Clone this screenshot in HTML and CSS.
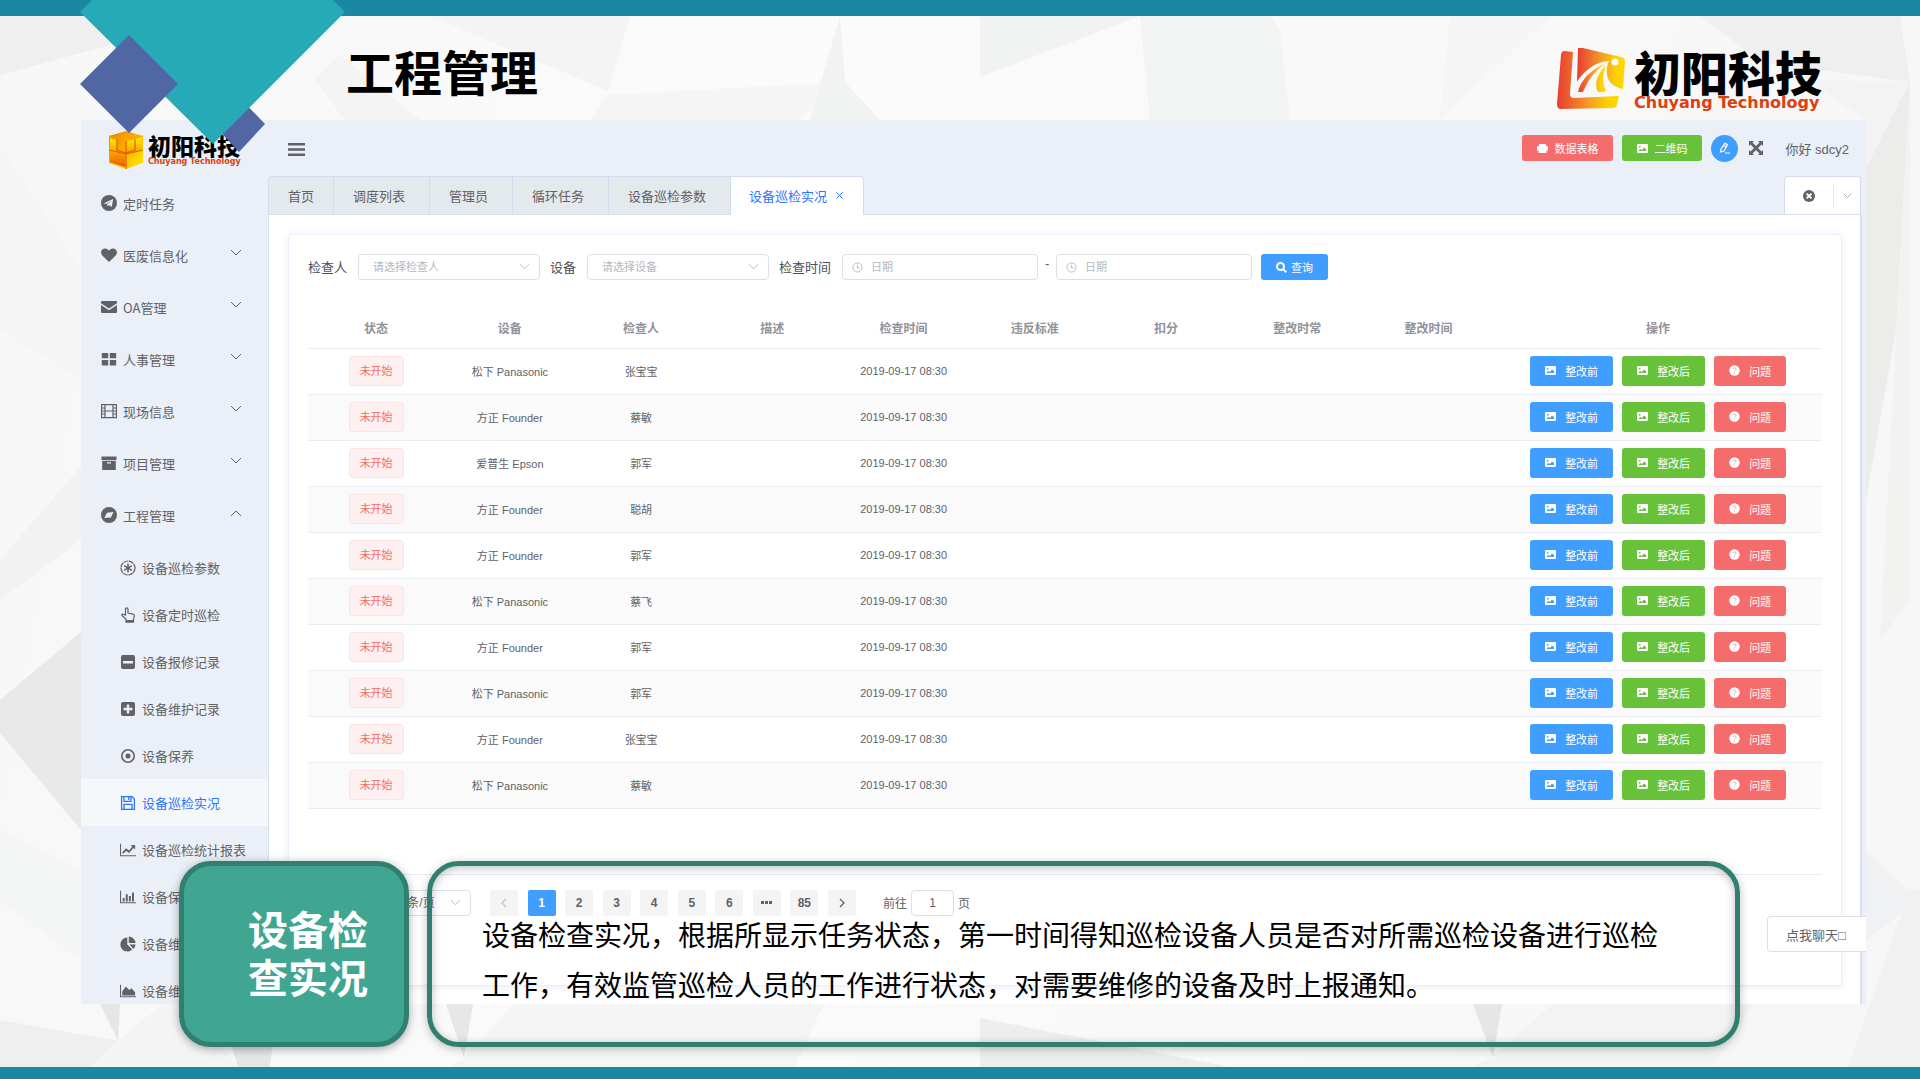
FILE: index.html
```html
<!DOCTYPE html>
<html lang="zh-CN">
<head>
<meta charset="utf-8">
<title>工程管理</title>
<link rel="stylesheet" href="styles.css">
</head>
<body>
<svg class="defs" aria-hidden="true">
  <defs>
    <linearGradient id="sun" x1="0" x2="1" y1="0" y2="0"><stop offset="0" stop-color="#e83b32"/><stop offset=".5" stop-color="#f49a26"/><stop offset=".8" stop-color="#fdd000"/><stop offset="1" stop-color="#fdd900"/></linearGradient>
    <linearGradient id="cubeA" x1="0" x2="1" y1="0" y2="1"><stop offset="0" stop-color="#f47a00"/><stop offset="1" stop-color="#ffee00"/></linearGradient>
    <linearGradient id="cubeB" x1="0" x2="0" y1="0" y2="1"><stop offset="0" stop-color="#fff000"/><stop offset="1" stop-color="#ee5a00"/></linearGradient>
    <symbol id="i-down" viewBox="0 0 12 8"><path d="M1 1l5 5 5-5" fill="none" stroke="currentColor"/></symbol>
    <symbol id="i-up" viewBox="0 0 12 8"><path d="M1 7l5-5 5 5" fill="none" stroke="currentColor"/></symbol>
    <symbol id="i-pic" viewBox="0 0 11 11"><path fill-rule="evenodd" d="M1 1h9q1 0 1 1v7q0 1-1 1H1q-1 0-1-1V2q0-1 1-1zM2 8h7V6L7 4.500 5 7 3.500 6 2 7zM2 3v1.500h1.500V3z"/></symbol>
    <symbol id="i-help" viewBox="0 0 11 11"><circle cx="5.500" cy="5.500" r="5.200"/><path d="M4 4.300q.2-1.400 1.600-1.400T7 4.200q0 .7-.8 1.100-.7.400-.7 1.200M5.500 7.400v1.100" fill="none" stroke="#f9a5a5"/></symbol>
    <symbol id="i-clock" viewBox="0 0 12 12"><g fill="none" stroke="currentColor"><circle cx="6" cy="6" r="5"/><path d="M6 3v3.500h2.500"/></g></symbol>
    <symbol id="i-plane" viewBox="0 0 16 16"><circle cx="8" cy="8" r="8"/><path d="M2.800 8.300L12.200 4l-1.500 8-3-2-1.300 1.500-.3-2.300L10.500 6 5 9z" fill="#ebf0f8"/></symbol>
    <symbol id="i-heart" viewBox="0 0 16 16"><path d="M8 15L1.300 8.400C-1.400 5.300.7 1.500 4 1.500c2 0 3.300 1 4 2.300.7-1.300 2-2.300 4-2.300 3.300 0 5.400 3.800 2.700 6.900z"/></symbol>
    <symbol id="i-mail" viewBox="0 0 16 16"><path d="M1 2h14q1 0 1 1v1.200L8 9.500 0 4.200V3q0-1 1-1zM0 6l8 5.300L16 6v7q0 1-1 1H1q-1 0-1-1z"/></symbol>
    <symbol id="i-grid" viewBox="0 0 16 16"><path d="M1.500 2h5q.7 0 .7.700v4.500H.8V2.700q0-.7.700-.7zM9 2h5.500q.7 0 .7.700v4.500H8.800V2zM.8 9h6.400v5.500H1.500q-.7 0-.7-.7zM8.800 9h6.400v4.800q0 .7-.7.700H8.800z"/></symbol>
    <symbol id="i-film" viewBox="0 0 16 16"><path d="M.6 1.600h14.800v13H.6zM4 1.600v13M12 1.600v13M4 8h8M.6 5H4M.6 8H4M.6 11H4M12 5h3.400M12 8h3.400M12 11h3.400" fill="none" stroke="currentColor" stroke-width="1.200"/></symbol>
    <symbol id="i-box" viewBox="0 0 16 16"><path d="M.5 1.500h15V5H.5z"/><path fill-rule="evenodd" d="M1.200 5.700h13.600V15H1.200zM6 7.300v1.200h4V7.300z"/></symbol>
    <symbol id="i-compass" viewBox="0 0 16 16"><circle cx="8" cy="8" r="8"/><path d="M6 5.700l6.500-.7-2.600 5.500-6.600.6z" fill="#ebf0f8"/></symbol>
    <symbol id="i-aster" viewBox="0 0 16 16"><circle cx="8" cy="8" r="7" fill="none" stroke="currentColor" stroke-width="1.200" stroke-dasharray="5 .6"/><path d="M8 3.500v9M4.100 5.700l7.800 4.600M11.900 5.700l-7.800 4.600" fill="none" stroke="currentColor" stroke-width="1.500"/></symbol>
    <symbol id="i-hand" viewBox="0 0 16 16"><path d="M6 14.800V12L2 8.500Q1 7 3 7l2.500 1V2q0-1.200 1.200-1.200T8 2v4l5 1.200q1.500.3 1.400 1.800L13.500 12v2.800z" fill="none" stroke="currentColor" stroke-width="1.200"/><path d="M6 13h8v2.500H6z"/></symbol>
    <symbol id="i-minus" viewBox="0 0 16 16"><path fill-rule="evenodd" d="M3 1h10q2 0 2 2v10q0 2-2 2H3q-2 0-2-2V3q0-2 2-2zm0 6v2.500h10V7z"/></symbol>
    <symbol id="i-plus" viewBox="0 0 16 16"><path fill-rule="evenodd" d="M3 1h10q2 0 2 2v10q0 2-2 2H3q-2 0-2-2V3q0-2 2-2zm3.800 2.500v3.300H3.500v2.400h3.300v3.300h2.400V9.200h3.300V6.800H9.200V3.500z"/></symbol>
    <symbol id="i-target" viewBox="0 0 16 16"><circle cx="8" cy="8" r="6.200" fill="none" stroke="currentColor" stroke-width="1.600"/><circle cx="8" cy="8" r="2.500"/></symbol>
    <symbol id="i-save" viewBox="0 0 16 16"><path d="M1.600 1.600h10.600l2.200 2.400v10.400H1.600zM4 1.600v4.800h7V1.600M4 14.400v-5h8v5M8.800 2v3" fill="none" stroke="currentColor" stroke-width="1.300"/></symbol>
    <symbol id="i-line" viewBox="0 0 18 14"><path d="M.6 0v13.400H18" fill="none" stroke="currentColor" stroke-width="1.200"/><path d="M3 10.500l4-4 3 2.500 5-5.500" fill="none" stroke="currentColor" stroke-width="2"/><path d="M12 1.500h5v5z"/></symbol>
    <symbol id="i-bar" viewBox="0 0 18 14"><path d="M.6 0v13.400H18" fill="none" stroke="currentColor" stroke-width="1.200"/><path d="M3 8h2.200v4H3zM6.500 4h2.200v8H6.500zM10 6h2.200v6H10zM13.500 2h2.200v10h-2.200z"/></symbol>
    <symbol id="i-area" viewBox="0 0 18 14"><path d="M.6 0v13.400H18" fill="none" stroke="currentColor" stroke-width="1.200"/><path d="M2.500 12V7.500L6.500 2l4 4 2.500-2 4 4.500V12z"/></symbol>
    <symbol id="i-pie" viewBox="0 0 16 16"><path d="M7.300 1.500v7l5 5A7 7 0 1 1 7.300 1.500z"/><path d="M8.800.5A7 7 0 0 1 15.500 7H8.800zM9.500 8.500h6a7 7 0 0 1-2 4.500z"/></symbol>
  </defs>
</svg>

<div class="slide">
  <svg class="facets" viewBox="0 0 1920 1079" preserveAspectRatio="none" aria-hidden="true">
    <path fill="#ececec" d="M0 16H130L110 45 0 75z"/>
    <path fill="#f2f2f2" d="M0 145L81 270V380L0 330z" opacity=".4"/>
    <path fill="#f0f0f0" d="M0 560L81 466V540L0 600z"/>
    <path fill="#e2e3e4" d="M0 700L81 632V830L0 733z"/>
    <path fill="#eeeff0" d="M0 830L81 870V960L0 900z" opacity=".5"/>
    <path fill="#ececec" d="M0 1020L118 1041 100 1067H0z"/>
    <path fill="#dedfdf" d="M100 1004h20l-2 37zM230 1040h43l-3 27h-32zM446 1004h27l-9 54zM1473 1004h29l-9 54z"/>
    <path fill="#f3f3f3" d="M118 1041l60-50 60 76H90zM464 1058l50-54h310l-30 63H450z"/>
    <path fill="#e8e9e9" d="M980 1018l250 49H980z"/>
    <path fill="#f2f2f2" d="M1493 1056l60-52h200l-40 63h-240z"/>
    <path fill="#f2f2f2" d="M430 16h200l-22 75zM340 55l80 65h-75l-30-40z"/>
    <path fill="#f4f4f4" d="M608 95L840 82 800 120H590z"/>
    <path fill="#eeefef" d="M840 16l5 66 35 38h-70zM980 16h160L980 77z"/>
    <path fill="#f0f1f1" d="M1140 16h130l10 14 10 90h-140z"/>
    <path fill="#f5f5f5" d="M1450 16h100l-110 104z"/>
    <path fill="#ecedec" d="M1700 16h200l10 66-150-20z"/>
    <path fill="#f2f2f2" d="M1910 82L1866 168V120l-60-40z"/>
    <path fill="#e8e8e7" d="M1910 82L1866 168V500l30-170z"/>
    <path fill="#f1f1f0" d="M1910 82V600L1880 640 1900 260z"/>
    <path fill="#eef0f1" d="M1866 850l52 50-52 40z"/>
    <path fill="#f0efef" d="M1910 890L1848 1067H1920V890z"/>
  </svg>
  <div class="band"></div>

  <header class="title-bar">
    <h1 class="title">工程管理</h1>
    <div class="brand">
      <svg class="brand-mark" viewBox="0 0 68 61" aria-hidden="true">
        <path fill="url(#sun)" d="M8 3l8 1-3 42q0 4 4 4l45-2-2 9q-1 3-4 3L4 61q-4 0-4-5L4 7q0-4 4-4z"/>
        <path fill="url(#sun)" d="M22 0h4l38 9q4 1 4 4l-2 28q-14-3-16-14-1-8 2-14-12 0-24 11Q22 30 20 34l1-34z"/>
        <path fill="url(#sun)" d="M21 44q4-18 28-29-16 11-23 29zM41 44q-6-12 8-27-6 14 0 26l-3 1z"/>
        <circle cx="58" cy="14" r="3.500" fill="#fff"/>
      </svg>
      <div class="brand-text"><span class="brand-cn">初阳科技</span><span class="brand-en">Chuyang Technology</span></div>
    </div>
  </header>

  <main class="app">
    <nav class="sidebar" aria-label="主菜单">
      <div class="logo">
        <svg class="logo-mark" viewBox="0 0 34 38" aria-hidden="true">
          <path fill="url(#cubeA)" d="M0 5L17 0l17 5v27l-17 6-17-6z"/>
          <path fill="url(#cubeB)" d="M1 7l7 2v11l8 2v14L1 31zM18 9l15-3v14l-15 3z"/>
          <path d="M17 10v28M0 19l17 4 17-4M8 8v11l9 3M26 8v11l-9 3" fill="none" stroke="#e85a00" stroke-width="1.200"/>
          <path d="M0 5l17 5 17-5M9 3l17 4M25 3L9 7" fill="none" stroke="#f9a000" stroke-width="1"/>
        </svg>
        <div class="logo-text"><span class="logo-cn">初阳科技</span><span class="logo-en">Chuyang Technology</span></div>
      </div>
      <ul class="menu">
        <li><a href="#" class="item"><svg class="ico"><use href="#i-plane"/></svg>定时任务</a></li>
        <li><a href="#" class="item"><svg class="ico"><use href="#i-heart"/></svg>医废信息化<svg class="arrow"><use href="#i-down"/></svg></a></li>
        <li><a href="#" class="item"><svg class="ico"><use href="#i-mail"/></svg>OA管理<svg class="arrow"><use href="#i-down"/></svg></a></li>
        <li><a href="#" class="item"><svg class="ico"><use href="#i-grid"/></svg>人事管理<svg class="arrow"><use href="#i-down"/></svg></a></li>
        <li><a href="#" class="item"><svg class="ico"><use href="#i-film"/></svg>现场信息<svg class="arrow"><use href="#i-down"/></svg></a></li>
        <li><a href="#" class="item"><svg class="ico"><use href="#i-box"/></svg>项目管理<svg class="arrow"><use href="#i-down"/></svg></a></li>
        <li><a href="#" class="item"><svg class="ico"><use href="#i-compass"/></svg>工程管理<svg class="arrow"><use href="#i-up"/></svg></a>
          <ul class="submenu">
            <li><a href="#" class="sub"><svg class="sico"><use href="#i-aster"/></svg>设备巡检参数</a></li>
            <li><a href="#" class="sub"><svg class="sico"><use href="#i-hand"/></svg>设备定时巡检</a></li>
            <li><a href="#" class="sub"><svg class="sico"><use href="#i-minus"/></svg>设备报修记录</a></li>
            <li><a href="#" class="sub"><svg class="sico"><use href="#i-plus"/></svg>设备维护记录</a></li>
            <li><a href="#" class="sub"><svg class="sico"><use href="#i-target"/></svg>设备保养</a></li>
            <li><a href="#" class="sub current"><svg class="sico"><use href="#i-save"/></svg>设备巡检实况</a></li>
            <li><a href="#" class="sub"><svg class="sico"><use href="#i-line"/></svg>设备巡检统计报表</a></li>
            <li><a href="#" class="sub"><svg class="sico"><use href="#i-bar"/></svg>设备保</a></li>
            <li><a href="#" class="sub"><svg class="sico"><use href="#i-pie"/></svg>设备维</a></li>
            <li><a href="#" class="sub"><svg class="sico"><use href="#i-area"/></svg>设备维</a></li>
          </ul>
        </li>
      </ul>
    </nav>

    <div class="main">
      <div class="toolbar">
        <button class="icon-btn burger" aria-label="折叠菜单"><svg viewBox="0 0 17 15"><path d="M0 1h17v2.500H0zM0 6.300h17v2.500H0zM0 11.600h17v2.500H0z"/></svg></button>
        <div class="tools">
          <button class="btn small danger"><svg viewBox="0 0 11 11"><path d="M2 1h7v2h1q1 0 1 1v3.500H9.500V10h-8V7.500H0V4q0-1 1-1h1z"/></svg>数据表格</button>
          <button class="btn small success"><svg><use href="#i-pic"/></svg>二维码</button>
          <button class="round" aria-label="编辑"><svg viewBox="0 0 12 12"><path d="M1.500 10l.5-3L6 1.200l2.500 1.500L5 9zM4.500 3.500L7 5M6 11h5" fill="none" stroke="#fff" stroke-width="1.200"/></svg></button>
          <button class="icon-btn full" aria-label="全屏"><svg viewBox="0 0 14 14"><path d="M0 0h5L3.500 1.500 7 5l3.500-3.500L9 0h5v5l-1.500-1.500L9 7l3.500 3.500L14 9v5H9l1.500-1.500L7 9l-3.500 3.500L5 14H0V9l1.500 1.500L5 7 1.500 3.500 0 5z"/></svg></button>
          <span class="hello">你好 sdcy2</span>
        </div>
      </div>

      <div class="tabs">
        <a href="#" class="tab home">首页</a>
        <a href="#" class="tab">调度列表</a>
        <a href="#" class="tab">管理员</a>
        <a href="#" class="tab">循环任务</a>
        <a href="#" class="tab">设备巡检参数</a>
        <a href="#" class="tab active">设备巡检实况<svg class="x" viewBox="0 0 7 7"><path d="M.5.5l6 6M6.500.5l-6 6" fill="none" stroke="currentColor"/></svg></a>
        <div class="tab-tools">
          <button class="icon-btn close-all" aria-label="关闭标签"><svg viewBox="0 0 12 12"><circle cx="6" cy="6" r="6"/><path d="M3.600 3.600l4.800 4.800M8.400 3.600L3.600 8.400" stroke="#fff" stroke-width="2"/></svg></button>
          <button class="icon-btn more" aria-label="更多"><svg><use href="#i-down"/></svg></button>
        </div>
      </div>

      <div class="content">
        <section class="card">
          <form class="filters">
            <label for="who">检查人</label>
            <div class="field"><select id="who"><option>请选择检查人</option></select><svg class="caret"><use href="#i-down"/></svg></div>
            <label for="dev">设备</label>
            <div class="field"><select id="dev"><option>请选择设备</option></select><svg class="caret"><use href="#i-down"/></svg></div>
            <label for="from">检查时间</label>
            <div class="field date"><input id="from" type="text" placeholder="日期"><svg class="clock"><use href="#i-clock"/></svg></div>
            <span class="dash">-</span>
            <div class="field date"><input type="text" placeholder="日期" aria-label="结束日期"><svg class="clock"><use href="#i-clock"/></svg></div>
            <button type="button" class="btn search"><svg viewBox="0 0 11 11"><path d="M4.500 1a3.500 3.500 0 1 1 0 7 3.500 3.500 0 0 1 0-7zM7 7l3.300 3.300" fill="none" stroke="#fff" stroke-width="2"/></svg>查询</button>
          </form>

          <table class="grid">
            <colgroup><col class="c-status"><col span="8" class="c-data"><col class="c-ops"></colgroup>
            <thead><tr><th>状态</th><th>设备</th><th>检查人</th><th>描述</th><th>检查时间</th><th>违反标准</th><th>扣分</th><th>整改时常</th><th>整改时间</th><th>操作</th></tr></thead>
            <tbody>
              <tr><td><span class="tag">未开始</span></td><td>松下 Panasonic</td><td>张宝宝</td><td></td><td>2019-09-17 08:30</td><td></td><td></td><td></td><td></td><td><div class="ops"><button class="btn primary"><svg><use href="#i-pic"/></svg>整改前</button><button class="btn success"><svg><use href="#i-pic"/></svg>整改后</button><button class="btn danger"><svg><use href="#i-help"/></svg>问题</button></div></td></tr>
              <tr><td><span class="tag">未开始</span></td><td>方正 Founder</td><td>蔡敏</td><td></td><td>2019-09-17 08:30</td><td></td><td></td><td></td><td></td><td><div class="ops"><button class="btn primary"><svg><use href="#i-pic"/></svg>整改前</button><button class="btn success"><svg><use href="#i-pic"/></svg>整改后</button><button class="btn danger"><svg><use href="#i-help"/></svg>问题</button></div></td></tr>
              <tr><td><span class="tag">未开始</span></td><td>爱普生 Epson</td><td>郭军</td><td></td><td>2019-09-17 08:30</td><td></td><td></td><td></td><td></td><td><div class="ops"><button class="btn primary"><svg><use href="#i-pic"/></svg>整改前</button><button class="btn success"><svg><use href="#i-pic"/></svg>整改后</button><button class="btn danger"><svg><use href="#i-help"/></svg>问题</button></div></td></tr>
              <tr><td><span class="tag">未开始</span></td><td>方正 Founder</td><td>聪胡</td><td></td><td>2019-09-17 08:30</td><td></td><td></td><td></td><td></td><td><div class="ops"><button class="btn primary"><svg><use href="#i-pic"/></svg>整改前</button><button class="btn success"><svg><use href="#i-pic"/></svg>整改后</button><button class="btn danger"><svg><use href="#i-help"/></svg>问题</button></div></td></tr>
              <tr><td><span class="tag">未开始</span></td><td>方正 Founder</td><td>郭军</td><td></td><td>2019-09-17 08:30</td><td></td><td></td><td></td><td></td><td><div class="ops"><button class="btn primary"><svg><use href="#i-pic"/></svg>整改前</button><button class="btn success"><svg><use href="#i-pic"/></svg>整改后</button><button class="btn danger"><svg><use href="#i-help"/></svg>问题</button></div></td></tr>
              <tr><td><span class="tag">未开始</span></td><td>松下 Panasonic</td><td>蔡飞</td><td></td><td>2019-09-17 08:30</td><td></td><td></td><td></td><td></td><td><div class="ops"><button class="btn primary"><svg><use href="#i-pic"/></svg>整改前</button><button class="btn success"><svg><use href="#i-pic"/></svg>整改后</button><button class="btn danger"><svg><use href="#i-help"/></svg>问题</button></div></td></tr>
              <tr><td><span class="tag">未开始</span></td><td>方正 Founder</td><td>郭军</td><td></td><td>2019-09-17 08:30</td><td></td><td></td><td></td><td></td><td><div class="ops"><button class="btn primary"><svg><use href="#i-pic"/></svg>整改前</button><button class="btn success"><svg><use href="#i-pic"/></svg>整改后</button><button class="btn danger"><svg><use href="#i-help"/></svg>问题</button></div></td></tr>
              <tr><td><span class="tag">未开始</span></td><td>松下 Panasonic</td><td>郭军</td><td></td><td>2019-09-17 08:30</td><td></td><td></td><td></td><td></td><td><div class="ops"><button class="btn primary"><svg><use href="#i-pic"/></svg>整改前</button><button class="btn success"><svg><use href="#i-pic"/></svg>整改后</button><button class="btn danger"><svg><use href="#i-help"/></svg>问题</button></div></td></tr>
              <tr><td><span class="tag">未开始</span></td><td>方正 Founder</td><td>张宝宝</td><td></td><td>2019-09-17 08:30</td><td></td><td></td><td></td><td></td><td><div class="ops"><button class="btn primary"><svg><use href="#i-pic"/></svg>整改前</button><button class="btn success"><svg><use href="#i-pic"/></svg>整改后</button><button class="btn danger"><svg><use href="#i-help"/></svg>问题</button></div></td></tr>
              <tr><td><span class="tag">未开始</span></td><td>松下 Panasonic</td><td>蔡敏</td><td></td><td>2019-09-17 08:30</td><td></td><td></td><td></td><td></td><td><div class="ops"><button class="btn primary"><svg><use href="#i-pic"/></svg>整改前</button><button class="btn success"><svg><use href="#i-pic"/></svg>整改后</button><button class="btn danger"><svg><use href="#i-help"/></svg>问题</button></div></td></tr>
            </tbody>
          </table>

          <div class="pagination">
            <div class="field size"><select aria-label="每页条数"><option>10条/页</option></select><svg class="caret"><use href="#i-down"/></svg></div>
            <div class="pages">
              <button class="page off" aria-label="上一页"><svg viewBox="0 0 6 10"><path d="M5 1L1 5l4 4" fill="none" stroke="currentColor" stroke-width="1.300"/></svg></button>
              <button class="page on">1</button>
              <button class="page">2</button>
              <button class="page">3</button>
              <button class="page">4</button>
              <button class="page">5</button>
              <button class="page">6</button>
              <button class="page" aria-label="更多页"><svg class="dots" viewBox="0 0 11 3"><path d="M0 0h3v3H0zM4 0h3v3H4zM8 0h3v3H8z"/></svg></button>
              <button class="page">85</button>
              <button class="page" aria-label="下一页"><svg viewBox="0 0 6 10"><path d="M1 1l4 4-4 4" fill="none" stroke="currentColor" stroke-width="1.300"/></svg></button>
            </div>
            <label class="jump">前往<input type="text" value="1">页</label>
          </div>
        </section>
      </div>
    </div>
    <button class="chat">点我聊天□</button>
  </main>
  <div class="foot"></div>

  <svg class="diamonds" viewBox="0 0 266 152" aria-hidden="true">
    <path fill="#5167a4" d="M159 97l26 27-26 28-26-28z"/>
    <path fill="#27aab8" d="M0 12L12 0h241l12 12-132 132z"/>
    <path fill="#5167a4" d="M49 35l49 49-49 49L0 84z"/>
  </svg>
  <div class="callout badge"><h2>设备检<br>查实况</h2></div>
  <div class="callout note"><p>设备检查实况，根据所显示任务状态，第一时间得知巡检设备人员是否对所需巡检设备进行巡检工作，有效监管巡检人员的工作进行状态，对需要维修的设备及时上报通知。</p></div>
</div>
</body>
</html>
```
FILE: styles.css
```css
* { box-sizing: border-box; }
body {
  margin: 0;
  font-family: "Liberation Sans", "Noto Sans CJK SC", sans-serif;
  font-size: 13px;
  color: #606266;
}
button, input, select { font: inherit; color: inherit; margin: 0; }
button { cursor: pointer; }
a { color: inherit; text-decoration: none; }
ul { list-style: none; margin: 0; padding: 0; }
svg { fill: currentColor; flex: none; display: block; }
.defs { position: absolute; width: 0; height: 0; }

/* slide frame */
.slide {
  position: relative;
  height: 100vh;
  display: flex;
  flex-direction: column;
  overflow: hidden;
  background: linear-gradient(100deg, #f7f7f7, #fbfbfb 40%, #f6f6f6);
}
.facets { position: absolute; left: 0; top: 0; width: 100%; height: 100%; opacity: .7; }
.band { position: relative; flex: none; height: 16px; background: #1a87a3; }
.title-bar {
  position: relative;
  flex: none;
  height: 104px;
  padding: 0 98px 0 346px;
  display: flex;
  justify-content: space-between;
}
.title {
  margin: 18px 0 0;
  font: 700 48px/72px "Noto Sans CJK SC", sans-serif;
  color: #000;
}
.brand { display: flex; gap: 9px; padding-top: 32px; }
.brand-mark { width: 68px; height: 61px; }
.brand-text { display: flex; flex-direction: column; }
.brand-cn {
  font: 900 47px/46px "Noto Sans CJK SC", sans-serif;
  color: #000;
}
.brand-en {
  font: 700 16px/18px "DejaVu Sans", sans-serif;
  color: #dc4010;
}
.foot { position: relative; flex: none; height: 75px; border-bottom: 12px solid #1a87a3; }

/* application window */
.app {
  position: relative;
  flex: 1;
  min-height: 0;
  margin: 0 54px 0 81px;
  display: flex;
  overflow: hidden;
  background: #ebf0f8;
}
.sidebar { flex: none; width: 187px; font-family: "Noto Sans CJK SC", sans-serif; }
.logo { height: 57px; padding: 11px 0 0 28px; display: flex; gap: 5px; }
.logo-mark { width: 34px; height: 38px; }
.logo-text { display: flex; flex-direction: column; padding-top: 2px; }
.logo-cn { font-weight: 900; font-size: 23px; line-height: 24px; color: #000; }
.logo-en { font: 700 8px/9px "DejaVu Sans", sans-serif; color: #dc4010; white-space: nowrap; }
.item { height: 52px; padding: 0 26px 0 20px; display: flex; align-items: center; gap: 6px; }
.ico { width: 16px; height: 16px; }
.arrow { width: 12px; height: 8px; margin-left: auto; margin-bottom: 4px; }
.submenu { padding-top: 3px; }
.sub { height: 47px; padding-left: 39px; display: flex; align-items: center; gap: 6px; white-space: nowrap; }
.sico { width: 16px; height: 16px; }
.current { background: #f4f8fb; color: #2f74ff; }

.main { flex: 1; min-width: 0; display: flex; flex-direction: column; }
.toolbar { flex: none; height: 56px; padding: 0 17px 0 20px; display: flex; align-items: center; justify-content: space-between; }
.tools { display: flex; align-items: center; gap: 9px; }
.icon-btn { border: 0; padding: 0; background: none; }
.burger svg { width: 17px; height: 15px; margin-top: 3px; }
.full { padding: 0 13px 0 2px; }
.full svg { width: 14px; height: 14px; }
.round {
  width: 27px; height: 27px; border: 0; border-radius: 50%; padding: 0;
  background: #409eff; display: flex; align-items: center; justify-content: center;
}
.round svg { width: 12px; height: 12px; }
.btn {
  height: 30px; padding: 0 15px; border: 0; border-radius: 3px;
  display: flex; align-items: center; gap: 9px;
  font-size: 11px; color: #fff; background: #409eff; white-space: nowrap;
}
.btn svg { width: 11px; height: 11px; }
.small { height: 26px; gap: 6px; }
.danger { background: #f56c6c; }
.success { background: #67c23a; }

.tabs { flex: none; display: flex; height: 39px; margin-right: 5px; border-bottom: 1px solid #d8dff0; font-family: "Noto Sans CJK SC", sans-serif; }
.tab {
  height: 38px; padding: 0 24px 1px 19px; display: flex; align-items: center; gap: 9px;
  background: #e4e9ed; border: 1px solid #d3dbec; border-width: 1px 1px 0 0;
}
.home { padding-right: 19px; border-left-width: 1px; border-top-left-radius: 4px; }
.active { height: 39px; padding-right: 20px; padding-left: 18px; background: #fff; color: #2f74ff; border-top-right-radius: 4px; }
.x { width: 7px; height: 7px; }
.tab-tools {
  margin-left: auto; width: 77px; padding: 6px 0; display: flex; background: #fff;
  border: 1px solid #d3dbec; border-bottom: 0; border-radius: 4px 4px 0 0;
}
.close-all { flex: 1; display: flex; align-items: center; justify-content: center; border-right: 1px solid #e4e7ed; }
.close-all svg { width: 12px; height: 12px; }
.more { width: 26px; display: flex; align-items: center; justify-content: center; color: #909399; }
.more svg { width: 9px; height: 6px; }

.content { flex: 1; min-height: 0; margin-right: 4px; padding: 19px 18px 19px 19px; background: #fff; border: 1px solid #d8dff0; border-width: 0 2px 0 1px; }
.card { padding: 19px 19px 69px; border: 1px solid #ebeef9; border-radius: 4px; box-shadow: 0 1px 8px #e9edf8; }
.filters { display: flex; align-items: center; height: 26px; margin-bottom: 28px; }
.filters label { margin-right: 11px; padding-bottom: 1px; color: #4c4f55; }
.field { display: grid; align-items: center; width: 182px; margin-right: 10px; }
.field > * { grid-area: 1 / 1; }
.field select, .field input {
  width: 100%; height: 26px; padding: 0 14px; border: 1px solid #dcdfe6; border-radius: 4px;
  background: #fff; font-size: 11px; color: #b4b8c0; appearance: none;
}
.field input::placeholder { color: #b4b8c0; opacity: 1; }
.caret { justify-self: end; width: 11px; height: 8px; margin-right: 10px; color: #b4b8c0; pointer-events: none; }
.date { width: 196px; margin-right: 0; }
.field.date input { padding-left: 28px; }
.clock { width: 11px; height: 11px; margin-left: 10px; color: #b4b8c0; }
.dash { width: 18px; text-align: center; padding-bottom: 7px; }
.search { height: 26px; margin-left: 9px; gap: 4px; }

.grid { width: 100%; table-layout: fixed; border-collapse: collapse; font-size: 11px; text-align: center; }
.c-status { width: 9%; }
.c-data { width: 8.67%; }
.grid th { height: 40px; padding: 0; font-size: 12px; color: #909399; border-bottom: 1px solid #ebeef5; }
.grid td { height: 46px; padding: 0 0 1px; border-bottom: 1px solid #ebeef5; }
.grid tbody tr:nth-child(even) { background: #fafafa; }
.tag {
  display: inline-block; height: 30px; padding: 0 10px; line-height: 28px; vertical-align: middle;
  color: #f56c6c; background: #fef0f0; border: 1px solid #fde2e2; border-radius: 4px;
}
.ops { display: flex; justify-content: center; gap: 9px; }

.pagination { margin-top: 65px; padding: 15px 0 0 73px; border-top: 1px solid #e8ebf4; display: flex; align-items: center; }
.size { width: 90px; margin-right: 19px; }
.field.size select { color: #606266; font-size: 12px; padding: 0 0 0 12px; }
.pages { width: 366px; display: flex; justify-content: space-between; }
.page {
  width: 28px; height: 26px; padding: 0; border: 0; border-radius: 2px; background: #f4f4f5;
  display: flex; align-items: center; justify-content: center; font-size: 12px; font-weight: 700;
}
.page svg { width: 6px; height: 10px; }
.page .dots { width: 11px; height: 3px; }
.page.on { background: #409eff; color: #fff; }
.off { color: #c0c4cc; }
.jump { display: flex; align-items: center; margin-left: 27px; font-size: 12px; }
.jump input { width: 43px; height: 26px; margin: 0 4px; padding: 0; text-align: center; border: 1px solid #dcdfe6; border-radius: 4px; background: #fff; }

.chat {
  position: absolute; right: 0; bottom: 52px; width: 99px; height: 36px; padding: 0 0 0 18px; text-align: left;
  border: 1px solid #dcdfe6; border-right: 0; border-radius: 4px 0 0 4px; background: #fff; white-space: nowrap;
}

/* shapes and callouts above the window */
.diamonds { position: absolute; left: 80px; top: 0; width: 266px; height: 152px; }
.callout {
  position: absolute; bottom: 32px; height: 186px; border: 5px solid #2f8070; border-radius: 32px;
  font-family: "Noto Sans CJK SC", sans-serif;
}
.badge {
  left: 179px; width: 230px; display: flex; align-items: center; justify-content: center;
  padding: 0 0 4px 28px; background: #40a691; box-shadow: 0 2px 10px rgba(0, 0, 0, .35);
}
.badge h2 { margin: 0; font-size: 40px; line-height: 48px; color: #fff; }
.note {
  left: 427px; right: 180px; padding: 43px 70px 0 50px;
  box-shadow: 0 2px 10px rgba(0, 0, 0, .25), inset 0 2px 10px rgba(0, 0, 0, .25);
}
.note p { margin: 0; font-size: 28px; line-height: 50px; color: #000; }
```
